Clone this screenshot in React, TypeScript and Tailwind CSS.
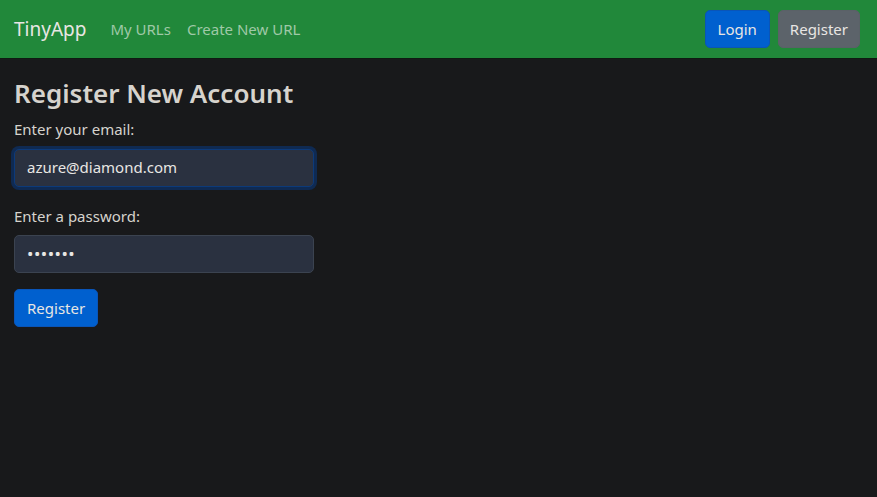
export default function App() {
  const font = { fontFamily: '"Segoe UI", "Noto Sans", "Open Sans", sans-serif' };
  return (
    <div className="min-h-[497px] w-full bg-[#18191b]" style={font}>
      <nav className="flex h-[59px] items-center justify-between border-b border-[#0f1a12] bg-[#21883a] px-[14px]">
        <div className="flex items-center">
          <span className="text-[19px] text-[#e8e6e3]">TinyApp</span>
          <span className="ml-[24px] text-[15px] text-[#9fc9a7]">My URLs</span>
          <span className="ml-[16px] text-[15px] text-[#9fc9a7]">Create New URL</span>
        </div>
        <div className="flex items-center gap-[8px] pr-[3px]">
          <button className="h-[38px] rounded-[5px] border border-[#0a55b8] bg-[#0060cf] px-[12px] text-[15px] text-[#e8e6e3]">Login</button>
          <button className="h-[38px] rounded-[5px] border border-[#5a6167] bg-[#5c636a] px-[11px] text-[15px] text-[#e8e6e3]">Register</button>
        </div>
      </nav>
      <div className="px-[14px] pt-[19px]">
        <h3 className="text-[26px] font-semibold leading-[1.2] text-[#d6d3cd]">Register New Account</h3>
        <label className="mt-[9px] block text-[15px] text-[#d6d3cd]">Enter your email:</label>
        <div className="mt-[8px] flex h-[38px] w-[300px] items-center rounded-[5px] border border-[#0c3a7a] bg-[#2a3140] px-[12px] text-[15px] text-[#e8e6e3] shadow-[0_0_0_3px_#0f2a52]">azure@diamond.com</div>
        <label className="mt-[18px] block text-[15px] text-[#d6d3cd]">Enter a password:</label>
        <div className="mt-[8px] flex h-[38px] w-[300px] items-center rounded-[5px] border border-[#3b4350] bg-[#2a3140] px-[12px] text-[17px] tracking-[0.5px] text-[#e8e6e3]">•••••••</div>
        <button className="mt-[16px] h-[38px] rounded-[5px] border border-[#0a55b8] bg-[#0060cf] px-[12px] text-[15px] text-[#e8e6e3]">Register</button>
      </div>
    </div>
  );
}
